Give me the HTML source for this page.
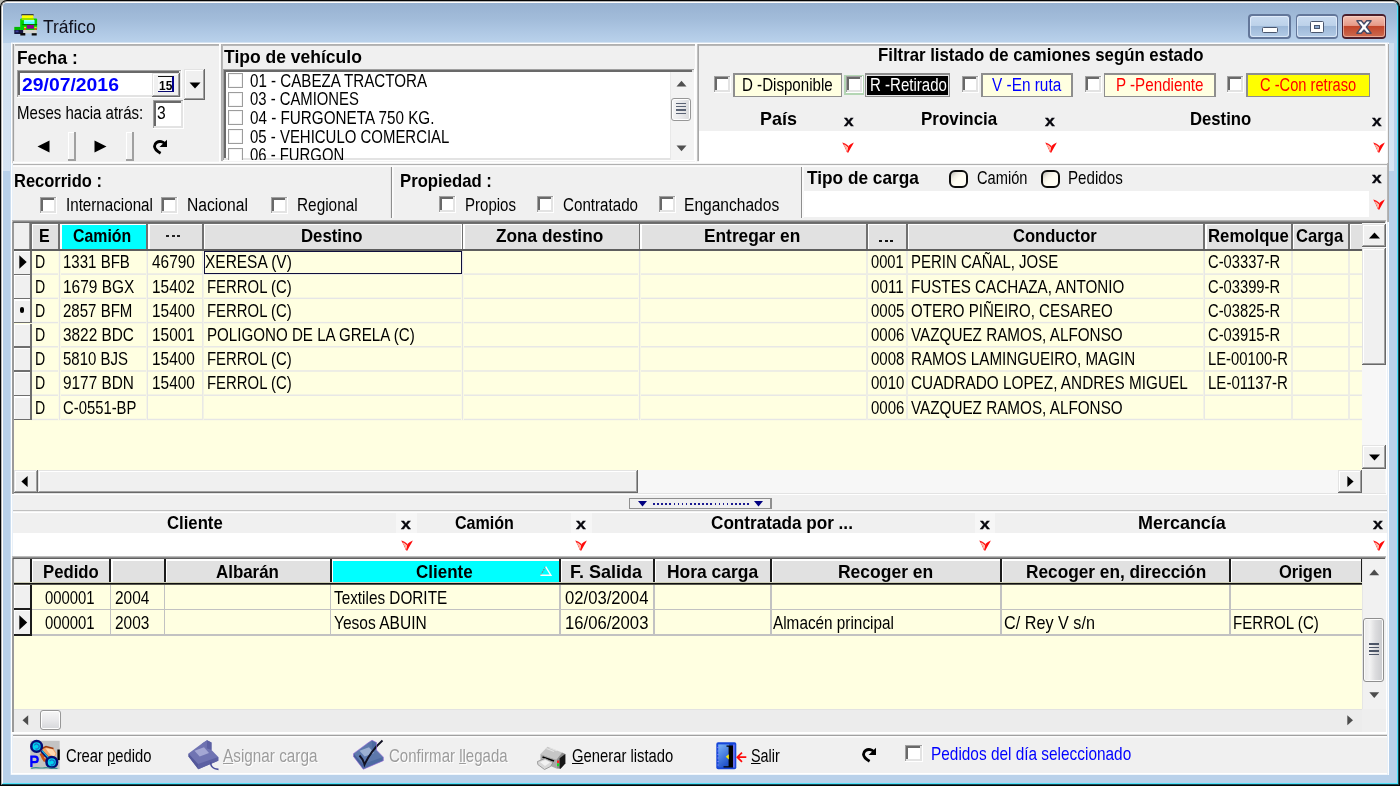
<!DOCTYPE html>
<html><head><meta charset="utf-8"><title>Tráfico</title><style>
html,body{margin:0;padding:0;}
body{width:1400px;height:786px;overflow:hidden;background:#000;position:relative;font-family:"Liberation Sans",sans-serif;}
#w{position:absolute;left:0;top:0;width:1400px;height:786px;overflow:hidden;}
#w div{position:absolute;box-sizing:border-box;}
#w svg{position:absolute;overflow:visible;}
.t{position:absolute;white-space:nowrap;transform-origin:0 0;font-family:"Liberation Sans",sans-serif;}
</style></head>
<body><div id="w">
<div style="left:0px;top:0px;width:1400px;height:786px;background:#b8b8b0;"></div>
<div style="left:0px;top:6px;width:1400px;height:780px;background:#000;"></div>
<div style="left:0px;top:0px;width:1400px;height:786px;background:#050505;border-radius:7px 7px 0 0;"></div>
<div style="left:1px;top:1px;width:1398px;height:784px;border-radius:6px 6px 0 0;border-style:solid;border-width:1px;border-color:#b4b4b4 #164852 #164852 #b4b4b4;"></div>
<div style="left:2px;top:2px;width:1396px;height:782px;border-radius:5px 5px 0 0;border-style:solid;border-width:1px;border-color:#ffffff #4fe3fb #4fe3fb #ffffff;background:#b9d1ea;"></div>
<div style="left:3px;top:3px;width:1394px;height:40px;background:linear-gradient(to bottom,#98b2d1 0,#a2bcda 40%,#b0c9e5 75%,#bad2eb 100%);border-radius:4px 4px 0 0;"></div>
<svg style="left:14px;top:14px" width="24" height="22" viewBox="14 14 24 22">
<rect x="21.4" y="14.1" width="12.2" height="1.6" fill="#2c3038"/>
<rect x="22" y="15.3" width="11.3" height="3.8" fill="#ffff00"/>
<rect x="20.2" y="18.4" width="16.9" height="11.8" rx="1" fill="#00d400"/>
<rect x="21.6" y="18.2" width="12.4" height="2" fill="#9be000"/>
<rect x="23.9" y="20" width="10.7" height="4" fill="#5cffff"/>
<rect x="24.4" y="20.2" width="9.6" height="1.3" fill="#a8ffff"/>
<rect x="22.3" y="24" width="14.8" height="1.2" fill="#007800"/>
<rect x="26.8" y="25" width="7.1" height="3.7" fill="#900090"/>
<rect x="24" y="26.8" width="2.1" height="1.6" fill="#e8e820"/><rect x="24" y="28.2" width="2.1" height="1.8" fill="#f04030"/>
<rect x="34.4" y="26.8" width="2.3" height="1.6" fill="#e8e820"/><rect x="34.4" y="28.2" width="2.3" height="1.8" fill="#f04030"/>
<rect x="14.3" y="26.9" width="6.2" height="3.4" fill="#00b800"/>
<rect x="14.3" y="30" width="9.5" height="4" fill="#14143c"/>
<rect x="15.5" y="30.5" width="3" height="1.8" fill="#3a3c9a"/>
<rect x="23.2" y="30" width="13.5" height="3.3" fill="#d6d6ce"/>
<rect x="20.3" y="33" width="5" height="2.5" fill="#0a0a0a"/>
<rect x="31.7" y="33.2" width="5" height="2.3" fill="#0a0a0a"/>
</svg><span class="t" style="font-size:17.73px;line-height:17.73px;color:#10101c;left:42.9px;top:18.54px;transform:scaleX(0.9850);">Tráfico</span>
<div style="left:1248px;top:14px;width:42.5px;height:24.5px;border-radius:4px;background:#63779a;"></div>
<div style="left:1249.5px;top:15.5px;width:39.5px;height:21.5px;border-radius:3px;background:linear-gradient(to bottom,#c9dbf0 0,#bdd2ea 45%,#9db8d8 50%,#b3cbe6 100%);box-shadow:inset 0 0 0 1px rgba(235,244,255,.7);"></div>
<div style="left:1295.5px;top:14px;width:42.5px;height:24.5px;border-radius:4px;background:#63779a;"></div>
<div style="left:1297px;top:15.5px;width:39.5px;height:21.5px;border-radius:3px;background:linear-gradient(to bottom,#c9dbf0 0,#bdd2ea 45%,#9db8d8 50%,#b3cbe6 100%);box-shadow:inset 0 0 0 1px rgba(235,244,255,.7);"></div>
<div style="left:1341.5px;top:14px;width:44.5px;height:24.5px;border-radius:4px;background:#4b1f2c;"></div>
<div style="left:1343px;top:15.5px;width:41.5px;height:21.5px;border-radius:3px;background:linear-gradient(to bottom,#f3c0b2 0,#e69a88 45%,#c2452a 50%,#cc6a50 100%);box-shadow:inset 0 0 0 1px rgba(255,220,210,.55);"></div>
<div style="left:1262px;top:26.5px;width:15.5px;height:6px;background:#fff;border:1.3px solid #4a566e;border-radius:1.5px;"></div>
<div style="left:1309.5px;top:20.5px;width:14.5px;height:12px;background:#fff;border:1.3px solid #4a566e;border-radius:1.5px;"></div>
<div style="left:1313.5px;top:24.5px;width:6.5px;height:4px;background:#8aa6cc;border:1.2px solid #4a566e;"></div>
<svg style="left:1356px;top:19.5px" width="16" height="14" viewBox="0 0 16 14"><path d="M0.9 0.8h4.4L8 4 10.7 0.8h4.4L10.4 7l4.7 6.2h-4.4L8 10 5.3 13.2H0.9L5.6 7z" fill="#fff" stroke="#454a66" stroke-width="1.4" stroke-linejoin="round"/></svg><div style="left:3px;top:43px;width:7px;height:128px;background:linear-gradient(to bottom,#cfdff0 0,#d6e4f3 100%);"></div>
<div style="left:1389px;top:43px;width:4.5px;height:128px;background:linear-gradient(to bottom,#cfdff0 0,#d8e6f4 100%);"></div>
<div style="left:11px;top:42.6px;width:1378px;height:732.2px;background:#f0f0f0;"></div>
<div style="left:11px;top:42px;width:1378px;height:1px;background:#d5e3f2;"></div>
<div style="left:11px;top:43px;width:1378px;height:1px;background:#ffffff;"></div>
<div style="left:11px;top:44px;width:1378px;height:1px;background:#c7daee;"></div>
<div style="left:10px;top:43px;width:1px;height:732px;background:#ccdef0;"></div>
<div style="left:11px;top:43px;width:1px;height:732px;background:#ffffff;"></div>
<div style="left:12px;top:43px;width:1px;height:732px;background:#e8f0f8;"></div>
<div style="left:11px;top:773px;width:1378px;height:1px;background:#ffffff;"></div>
<div style="left:11px;top:774px;width:1378px;height:1px;background:#f1f6fb;"></div>
<div style="left:1387px;top:43px;width:1px;height:732px;background:#e8f0f8;"></div>
<div style="left:1388px;top:43px;width:1px;height:732px;background:#ffffff;"></div>
<div style="left:1387px;top:44px;width:1px;height:178px;background:#b6b6b6;"></div>
<div style="left:1388px;top:44px;width:1px;height:178px;background:#ababab;"></div>
<div style="left:12.6px;top:44px;width:208px;height:1px;background:#b0b0b0;"></div>
<div style="left:12.6px;top:45px;width:208px;height:1px;background:#b8b8b8;"></div>
<div style="left:12px;top:44.2px;width:1px;height:119px;background:#d0d0d0;"></div>
<div style="left:13px;top:44.2px;width:1px;height:119px;background:#a0a0a0;"></div>
<div style="left:14px;top:44.2px;width:1px;height:119px;background:#e8e8e8;"></div>
<div style="left:12.6px;top:161px;width:208px;height:1px;background:#f3f3f3;"></div>
<div style="left:12.6px;top:162px;width:208px;height:1px;background:#ffffff;"></div>
<div style="left:12.6px;top:163px;width:208px;height:1px;background:#f3f3f3;"></div>
<div style="left:219px;top:44.2px;width:1px;height:119px;background:#fefefe;"></div>
<div style="left:220px;top:44.2px;width:1px;height:119px;background:#f9f9f9;"></div>
<div style="left:221.2px;top:44px;width:475.4px;height:1px;background:#b0b0b0;"></div>
<div style="left:221.2px;top:45px;width:475.4px;height:1px;background:#b8b8b8;"></div>
<div style="left:221px;top:44.2px;width:1px;height:119px;background:#b0b0b0;"></div>
<div style="left:222px;top:44.2px;width:1px;height:119px;background:#b8b8b8;"></div>
<div style="left:221.2px;top:161px;width:475.4px;height:1px;background:#f3f3f3;"></div>
<div style="left:221.2px;top:162px;width:475.4px;height:1px;background:#ffffff;"></div>
<div style="left:221.2px;top:163px;width:475.4px;height:1px;background:#f3f3f3;"></div>
<div style="left:695px;top:44.2px;width:1px;height:119px;background:#fdfdfd;"></div>
<div style="left:696px;top:44.2px;width:1px;height:119px;background:#f9f9f9;"></div>
<div style="left:697.4px;top:44px;width:689.8px;height:1px;background:#b0b0b0;"></div>
<div style="left:697.4px;top:45px;width:689.8px;height:1px;background:#b8b8b8;"></div>
<div style="left:697px;top:44.2px;width:1px;height:119px;background:#c0c0c0;"></div>
<div style="left:698px;top:44.2px;width:1px;height:119px;background:#a8a8a8;"></div>
<div style="left:697.4px;top:161px;width:689.8px;height:1px;background:#f3f3f3;"></div>
<div style="left:697.4px;top:162px;width:689.8px;height:1px;background:#ffffff;"></div>
<div style="left:697.4px;top:163px;width:689.8px;height:1px;background:#f3f3f3;"></div>
<div style="left:1385px;top:44.2px;width:1px;height:119px;background:#f4f4f4;"></div>
<div style="left:1386px;top:44.2px;width:1px;height:119px;background:#ffffff;"></div>
<div style="left:1387px;top:44.2px;width:1px;height:119px;background:#f3f3f3;"></div>
<span class="t" style="font-size:17.88px;line-height:17.88px;color:#000;font-weight:bold;left:17.4px;top:49.62px;transform:scaleX(0.9707);">Fecha :</span>
<div style="left:17px;top:70px;width:164.5px;height:28px;background:#ffffff;"></div>
<div style="left:17px;top:70px;width:163.5px;height:27px;background:#a0a0a0;"></div>
<div style="left:18px;top:71px;width:162.5px;height:26px;background:#e3e3e3;"></div>
<div style="left:18px;top:71px;width:160.5px;height:24px;background:#696969;"></div>
<div style="left:20px;top:73px;width:158.5px;height:22px;background:#fff;"></div>
<span class="t" style="font-size:17.88px;line-height:17.88px;color:#0000ff;font-weight:bold;left:21.7px;top:76.52px;transform:scaleX(1.0840);">29/07/2016</span>
<div style="left:151.5px;top:73px;width:28px;height:24px;background:#696969;"></div>
<div style="left:151.5px;top:73px;width:27px;height:23px;background:#e3e3e3;"></div>
<div style="left:152.5px;top:74px;width:26px;height:22px;background:#a0a0a0;"></div>
<div style="left:152.5px;top:74px;width:25px;height:21px;background:#ffffff;"></div>
<div style="left:153.5px;top:75px;width:24px;height:20px;background:#f0f0f0;"></div>
<div style="left:158px;top:75.6px;width:16px;height:16px;background:#fafafa;border-top:1.5px solid #111;border-bottom:1.6px solid #0a0a70;border-right:2px solid #000090;"></div>
<span class="t" style="font-size:12.06px;line-height:12.06px;color:#000;font-weight:bold;left:158.7px;top:79.64px;transform:scaleX(0.9921);">15</span>
<div style="left:184px;top:69px;width:21px;height:30.5px;background:#696969;"></div>
<div style="left:184px;top:69px;width:20px;height:29.5px;background:#e3e3e3;"></div>
<div style="left:185px;top:70px;width:19px;height:28.5px;background:#a0a0a0;"></div>
<div style="left:185px;top:70px;width:18px;height:27.5px;background:#ffffff;"></div>
<div style="left:186px;top:71px;width:17px;height:26.5px;background:#f0f0f0;"></div>
<svg style="left:188.5px;top:82.4px" width="12" height="7" viewBox="0 0 12 7"><path d="M0.5 0.5h11L6 6.5z" fill="#000"/></svg><span class="t" style="font-size:17.88px;line-height:17.88px;color:#000;left:17.4px;top:105.02px;transform:scaleX(0.8419);">Meses hacia atrás:</span>
<div style="left:152.5px;top:100px;width:31px;height:28.5px;background:#ffffff;"></div>
<div style="left:152.5px;top:100px;width:30px;height:27.5px;background:#a0a0a0;"></div>
<div style="left:153.5px;top:101px;width:29px;height:26.5px;background:#e3e3e3;"></div>
<div style="left:153.5px;top:101px;width:27px;height:24.5px;background:#696969;"></div>
<div style="left:155.5px;top:103px;width:25px;height:22.5px;background:#fff;"></div>
<span class="t" style="font-size:17.88px;line-height:17.88px;color:#000;left:157.4px;top:105.12px;transform:scaleX(0.8755);">3</span>
<svg style="left:36.5px;top:140px" width="13" height="13" viewBox="0 0 13 13"><path d="M12.5 0.5v12L0.5 6.5z" fill="#000"/></svg><svg style="left:94px;top:140px" width="13" height="13" viewBox="0 0 13 13"><path d="M0.5 0.5v12L12.5 6.5z" fill="#000"/></svg><div style="left:67.5px;top:131.5px;width:8px;height:29px;background:#a0a0a0;"></div>
<div style="left:67.5px;top:131.5px;width:6.5px;height:27.5px;background:#ffffff;"></div>
<div style="left:69px;top:133px;width:5px;height:26px;background:#f0f0f0;"></div>
<div style="left:125.5px;top:131.5px;width:8px;height:29px;background:#a0a0a0;"></div>
<div style="left:125.5px;top:131.5px;width:6.5px;height:27.5px;background:#ffffff;"></div>
<div style="left:127px;top:133px;width:5px;height:26px;background:#f0f0f0;"></div>
<svg style="left:152px;top:139px" width="16" height="15.5" viewBox="0 0 16 15.5"><path d="M8.6 14.2C5.2 12.4 2.6 10 2.5 7.3 2.4 3.9 6 1.9 9.3 2.6 10.8 2.9 12 3.7 12.9 4.8" fill="none" stroke="#000" stroke-width="2.9"/><path d="M15 0.7V7.9H7.5z" fill="#000"/></svg><span class="t" style="font-size:17.88px;line-height:17.88px;color:#000;font-weight:bold;left:223.7px;top:48.62px;transform:scaleX(0.9808);">Tipo de vehículo</span>
<div style="left:222.8px;top:69px;width:472px;height:91.5px;background:#ffffff;"></div>
<div style="left:222.8px;top:69px;width:471px;height:90.5px;background:#a0a0a0;"></div>
<div style="left:223.8px;top:70px;width:470px;height:89.5px;background:#e3e3e3;"></div>
<div style="left:223.8px;top:70px;width:468px;height:87.5px;background:#696969;"></div>
<div style="left:225.8px;top:72px;width:466px;height:85.5px;background:#fff;"></div>
<div style="left:225.5px;top:72px;width:444.5px;height:87.5px;overflow:hidden;"><div style="left:2.5px;top:0.9px;width:15px;height:15px;background:#fff;border:1px solid #9c9c9c;box-shadow:inset 0 0 0 1px #f4f4f4;"></div>
<span class="t" style="font-size:17.88px;line-height:17.88px;color:#000;left:24.7px;top:0.62px;transform:scaleX(0.8484);">01 - CABEZA TRACTORA</span>
<div style="left:2.5px;top:19.55px;width:15px;height:15px;background:#fff;border:1px solid #9c9c9c;box-shadow:inset 0 0 0 1px #f4f4f4;"></div>
<span class="t" style="font-size:17.88px;line-height:17.88px;color:#000;left:24.7px;top:19.27px;transform:scaleX(0.8313);">03 - CAMIONES</span>
<div style="left:2.5px;top:38.2px;width:15px;height:15px;background:#fff;border:1px solid #9c9c9c;box-shadow:inset 0 0 0 1px #f4f4f4;"></div>
<span class="t" style="font-size:17.88px;line-height:17.88px;color:#000;left:24.7px;top:37.92px;transform:scaleX(0.8536);">04 - FURGONETA 750 KG.</span>
<div style="left:2.5px;top:56.85px;width:15px;height:15px;background:#fff;border:1px solid #9c9c9c;box-shadow:inset 0 0 0 1px #f4f4f4;"></div>
<span class="t" style="font-size:17.88px;line-height:17.88px;color:#000;left:24.7px;top:56.57px;transform:scaleX(0.8372);">05 - VEHICULO COMERCIAL</span>
<div style="left:2.5px;top:75.5px;width:15px;height:15px;background:#fff;border:1px solid #9c9c9c;box-shadow:inset 0 0 0 1px #f4f4f4;"></div>
<span class="t" style="font-size:17.88px;line-height:17.88px;color:#000;left:24.7px;top:75.22px;transform:scaleX(0.8327);">06 - FURGON</span>
</div>
<div style="left:670px;top:72px;width:23.5px;height:87.5px;background:#f3f3f3;border-left:1px solid #e8e8e8;"></div>
<svg style="left:676px;top:80px" width="11" height="7" viewBox="0 0 11 7"><path d="M0.5 6.5L5.5 0.8 10.5 6.5z" fill="#505050"/></svg><svg style="left:676px;top:144.5px" width="11" height="7" viewBox="0 0 11 7"><path d="M0.5 0.5L5.5 6.2 10.5 0.5z" fill="#505050"/></svg><div style="left:670.5px;top:97.5px;width:20.5px;height:23px;border:1px solid #979797;border-radius:3px;background:linear-gradient(to right,#f5f5f5 0,#e9e9eb 50%,#d9dadc 100%);box-shadow:inset 0 0 0 1px #fff;"></div>
<div style="left:675.5px;top:102.5px;width:10px;height:1.6px;background:#5a6374;"></div>
<div style="left:675.5px;top:105.9px;width:10px;height:1.6px;background:#5a6374;"></div>
<div style="left:675.5px;top:109.3px;width:10px;height:1.6px;background:#5a6374;"></div>
<div style="left:675.5px;top:112.7px;width:10px;height:1.6px;background:#5a6374;"></div>
<span class="t" style="font-size:17.88px;line-height:17.88px;color:#000;font-weight:bold;left:878.2px;top:47.42px;transform:scaleX(0.9394);">Filtrar listado de camiones según estado</span>
<div style="left:714px;top:76px;width:17px;height:17px;background:#ffffff;"></div>
<div style="left:714px;top:76px;width:16px;height:16px;background:#a0a0a0;"></div>
<div style="left:715px;top:77px;width:15px;height:15px;background:#e3e3e3;"></div>
<div style="left:715px;top:77px;width:13px;height:13px;background:#696969;"></div>
<div style="left:717px;top:79px;width:11px;height:11px;background:#fff;"></div>
<div style="left:733px;top:73px;width:109px;height:24px;background:#8e8e8e;"></div>
<div style="left:734.5px;top:74.5px;width:106px;height:21px;background:#ffffe1;"></div>
<span class="t" style="font-size:17.88px;line-height:17.88px;color:#000;left:742.4px;top:77.32px;transform:scaleX(0.8461);">D -Disponible</span>
<div style="left:844px;top:74.5px;width:20px;height:20.5px;background:#b4d6b4;"></div>
<div style="left:845.5px;top:76px;width:17px;height:17px;background:#ffffff;"></div>
<div style="left:845.5px;top:76px;width:16px;height:16px;background:#a0a0a0;"></div>
<div style="left:846.5px;top:77px;width:15px;height:15px;background:#e3e3e3;"></div>
<div style="left:846.5px;top:77px;width:13px;height:13px;background:#696969;"></div>
<div style="left:848.5px;top:79px;width:11px;height:11px;background:#fff;"></div>
<div style="left:864.5px;top:73px;width:85.5px;height:24px;background:#8e8e8e;"></div>
<div style="left:866px;top:74.5px;width:82.5px;height:21px;background:#000;"></div>
<div style="left:866px;top:74.5px;width:82.5px;height:21px;background:#e6e6e6;"></div>
<div style="left:867px;top:75.5px;width:81px;height:19.5px;background:#000;"></div>
<span class="t" style="font-size:17.88px;line-height:17.88px;color:#fff;left:870.4px;top:77.32px;transform:scaleX(0.8422);">R -Retirado</span>
<div style="left:962px;top:76px;width:17px;height:17px;background:#ffffff;"></div>
<div style="left:962px;top:76px;width:16px;height:16px;background:#a0a0a0;"></div>
<div style="left:963px;top:77px;width:15px;height:15px;background:#e3e3e3;"></div>
<div style="left:963px;top:77px;width:13px;height:13px;background:#696969;"></div>
<div style="left:965px;top:79px;width:11px;height:11px;background:#fff;"></div>
<div style="left:981px;top:73px;width:91.5px;height:24px;background:#8e8e8e;"></div>
<div style="left:982.5px;top:74.5px;width:88.5px;height:21px;background:#ffffe1;"></div>
<span class="t" style="font-size:17.88px;line-height:17.88px;color:#0000ff;left:992.4px;top:77.32px;transform:scaleX(0.8606);">V -En ruta</span>
<div style="left:1085px;top:76px;width:17px;height:17px;background:#ffffff;"></div>
<div style="left:1085px;top:76px;width:16px;height:16px;background:#a0a0a0;"></div>
<div style="left:1086px;top:77px;width:15px;height:15px;background:#e3e3e3;"></div>
<div style="left:1086px;top:77px;width:13px;height:13px;background:#696969;"></div>
<div style="left:1088px;top:79px;width:11px;height:11px;background:#fff;"></div>
<div style="left:1103.5px;top:73px;width:112px;height:24px;background:#8e8e8e;"></div>
<div style="left:1105px;top:74.5px;width:109px;height:21px;background:#ffffe1;"></div>
<span class="t" style="font-size:17.88px;line-height:17.88px;color:#ff0000;left:1116.1px;top:77.32px;transform:scaleX(0.8500);">P -Pendiente</span>
<div style="left:1227px;top:76px;width:17px;height:17px;background:#ffffff;"></div>
<div style="left:1227px;top:76px;width:16px;height:16px;background:#a0a0a0;"></div>
<div style="left:1228px;top:77px;width:15px;height:15px;background:#e3e3e3;"></div>
<div style="left:1228px;top:77px;width:13px;height:13px;background:#696969;"></div>
<div style="left:1230px;top:79px;width:11px;height:11px;background:#fff;"></div>
<div style="left:1246px;top:73px;width:124px;height:24px;background:#8e8e8e;"></div>
<div style="left:1247.5px;top:74.5px;width:121px;height:21px;background:#ffff00;"></div>
<span class="t" style="font-size:17.88px;line-height:17.88px;color:#ff0000;left:1260.4px;top:77.32px;transform:scaleX(0.8213);">C -Con retraso</span>
<span class="t" style="font-size:17.88px;line-height:17.88px;color:#000;font-weight:bold;left:760.4px;top:111.32px;transform:scaleX(1.0041);">País</span>
<span class="t" style="font-size:17.88px;line-height:17.88px;color:#000;font-weight:bold;left:921.4px;top:111.32px;transform:scaleX(0.9477);">Provincia</span>
<span class="t" style="font-size:17.88px;line-height:17.88px;color:#000;font-weight:bold;left:1190.4px;top:111.32px;transform:scaleX(0.9344);">Destino</span>
<div style="left:698.5px;top:131px;width:687.5px;height:31.5px;background:#fff;"></div>
<span class="t" style="font-size:14.97px;line-height:14.97px;color:#05050c;font-weight:bold;left:843.5px;top:113.88px;transform:scaleX(1.1527);-webkit-text-stroke:0.35px #05050c;">x</span>
<svg style="left:841.7px;top:142px" width="12" height="11" viewBox="0 0 12 11"><path d="M6.4 3.9C8 2.4 9.8 1.2 11.8 0.4 10.6 3 8.4 6.6 6.2 10.8L5 9.4C5.5 7.6 6 5.8 6.4 3.9z" fill="#ff0a0a"/><path d="M0.2 0.5C2.6 1 4.6 2.2 6.4 3.9L5.9 5.4C4.6 4 3.2 3 1.9 2.4 3.2 4.4 4.2 6.8 5.1 9.4L6.2 10.8C5 10.8 4.4 9.4 4 8 3 5.4 1.8 3 0.2 0.5z" fill="#ff1a1a"/><path d="M1.9 2.4L5.9 5.4 5.1 9.4C4.2 6.8 3.2 4.4 1.9 2.4z" fill="#ffb49c"/></svg><span class="t" style="font-size:14.97px;line-height:14.97px;color:#05050c;font-weight:bold;left:1044.8px;top:113.88px;transform:scaleX(1.1767);-webkit-text-stroke:0.35px #05050c;">x</span>
<svg style="left:1044.8px;top:142px" width="12" height="11" viewBox="0 0 12 11"><path d="M6.4 3.9C8 2.4 9.8 1.2 11.8 0.4 10.6 3 8.4 6.6 6.2 10.8L5 9.4C5.5 7.6 6 5.8 6.4 3.9z" fill="#ff0a0a"/><path d="M0.2 0.5C2.6 1 4.6 2.2 6.4 3.9L5.9 5.4C4.6 4 3.2 3 1.9 2.4 3.2 4.4 4.2 6.8 5.1 9.4L6.2 10.8C5 10.8 4.4 9.4 4 8 3 5.4 1.8 3 0.2 0.5z" fill="#ff1a1a"/><path d="M1.9 2.4L5.9 5.4 5.1 9.4C4.2 6.8 3.2 4.4 1.9 2.4z" fill="#ffb49c"/></svg><span class="t" style="font-size:14.97px;line-height:14.97px;color:#05050c;font-weight:bold;left:1371.5px;top:113.88px;transform:scaleX(1.1527);-webkit-text-stroke:0.35px #05050c;">x</span>
<svg style="left:1372.5px;top:142px" width="12" height="11" viewBox="0 0 12 11"><path d="M6.4 3.9C8 2.4 9.8 1.2 11.8 0.4 10.6 3 8.4 6.6 6.2 10.8L5 9.4C5.5 7.6 6 5.8 6.4 3.9z" fill="#ff0a0a"/><path d="M0.2 0.5C2.6 1 4.6 2.2 6.4 3.9L5.9 5.4C4.6 4 3.2 3 1.9 2.4 3.2 4.4 4.2 6.8 5.1 9.4L6.2 10.8C5 10.8 4.4 9.4 4 8 3 5.4 1.8 3 0.2 0.5z" fill="#ff1a1a"/><path d="M1.9 2.4L5.9 5.4 5.1 9.4C4.2 6.8 3.2 4.4 1.9 2.4z" fill="#ffb49c"/></svg><div style="left:12.6px;top:164px;width:1374.7px;height:1px;background:#b0b0b0;"></div>
<div style="left:12.6px;top:165px;width:1374.7px;height:1px;background:#c0c0c0;"></div>
<div style="left:12.6px;top:165px;width:1374.7px;height:1px;background:#f6f6f6;"></div>
<div style="left:12.6px;top:166px;width:1374.7px;height:1px;background:#fcfcfc;"></div>
<div style="left:390px;top:167px;width:1px;height:51px;background:#e6e6e6;"></div>
<div style="left:391px;top:167px;width:1px;height:51px;background:#8e8e8e;"></div>
<div style="left:392px;top:167px;width:1px;height:51px;background:#dcdcdc;"></div>
<div style="left:392px;top:167px;width:1px;height:51px;background:#fcfcfc;"></div>
<div style="left:393px;top:167px;width:1px;height:51px;background:#f8f8f8;"></div>
<div style="left:801px;top:167px;width:1px;height:51px;background:#8e8e8e;"></div>
<div style="left:802px;top:167px;width:1px;height:51px;background:#d3d3d3;"></div>
<div style="left:802px;top:167px;width:1px;height:51px;background:#fbfbfb;"></div>
<div style="left:803px;top:167px;width:1px;height:51px;background:#f9f9f9;"></div>
<span class="t" style="font-size:17.88px;line-height:17.88px;color:#000;font-weight:bold;left:13.7px;top:173.32px;transform:scaleX(0.9227);">Recorrido :</span>
<div style="left:40px;top:196.5px;width:17px;height:17px;background:#ffffff;"></div>
<div style="left:40px;top:196.5px;width:16px;height:16px;background:#a0a0a0;"></div>
<div style="left:41px;top:197.5px;width:15px;height:15px;background:#e3e3e3;"></div>
<div style="left:41px;top:197.5px;width:13px;height:13px;background:#696969;"></div>
<div style="left:43px;top:199.5px;width:11px;height:11px;background:#fff;"></div>
<span class="t" style="font-size:17.88px;line-height:17.88px;color:#000;left:65.7px;top:197.32px;transform:scaleX(0.8497);">Internacional</span>
<div style="left:161px;top:196.5px;width:17px;height:17px;background:#ffffff;"></div>
<div style="left:161px;top:196.5px;width:16px;height:16px;background:#a0a0a0;"></div>
<div style="left:162px;top:197.5px;width:15px;height:15px;background:#e3e3e3;"></div>
<div style="left:162px;top:197.5px;width:13px;height:13px;background:#696969;"></div>
<div style="left:164px;top:199.5px;width:11px;height:11px;background:#fff;"></div>
<span class="t" style="font-size:17.88px;line-height:17.88px;color:#000;left:186.7px;top:197.32px;transform:scaleX(0.8763);">Nacional</span>
<div style="left:271px;top:196.5px;width:17px;height:17px;background:#ffffff;"></div>
<div style="left:271px;top:196.5px;width:16px;height:16px;background:#a0a0a0;"></div>
<div style="left:272px;top:197.5px;width:15px;height:15px;background:#e3e3e3;"></div>
<div style="left:272px;top:197.5px;width:13px;height:13px;background:#696969;"></div>
<div style="left:274px;top:199.5px;width:11px;height:11px;background:#fff;"></div>
<span class="t" style="font-size:17.88px;line-height:17.88px;color:#000;left:296.9px;top:197.32px;transform:scaleX(0.8610);">Regional</span>
<span class="t" style="font-size:17.88px;line-height:17.88px;color:#000;font-weight:bold;left:399.7px;top:173.32px;transform:scaleX(0.9354);">Propiedad :</span>
<div style="left:439.2px;top:196px;width:17px;height:17px;background:#ffffff;"></div>
<div style="left:439.2px;top:196px;width:16px;height:16px;background:#a0a0a0;"></div>
<div style="left:440.2px;top:197px;width:15px;height:15px;background:#e3e3e3;"></div>
<div style="left:440.2px;top:197px;width:13px;height:13px;background:#696969;"></div>
<div style="left:442.2px;top:199px;width:11px;height:11px;background:#fff;"></div>
<span class="t" style="font-size:17.88px;line-height:17.88px;color:#000;left:464.9px;top:197.32px;transform:scaleX(0.8421);">Propios</span>
<div style="left:537.3px;top:196px;width:17px;height:17px;background:#ffffff;"></div>
<div style="left:537.3px;top:196px;width:16px;height:16px;background:#a0a0a0;"></div>
<div style="left:538.3px;top:197px;width:15px;height:15px;background:#e3e3e3;"></div>
<div style="left:538.3px;top:197px;width:13px;height:13px;background:#696969;"></div>
<div style="left:540.3px;top:199px;width:11px;height:11px;background:#fff;"></div>
<span class="t" style="font-size:17.88px;line-height:17.88px;color:#000;left:563px;top:197.32px;transform:scaleX(0.8487);">Contratado</span>
<div style="left:658.8px;top:196px;width:17px;height:17px;background:#ffffff;"></div>
<div style="left:658.8px;top:196px;width:16px;height:16px;background:#a0a0a0;"></div>
<div style="left:659.8px;top:197px;width:15px;height:15px;background:#e3e3e3;"></div>
<div style="left:659.8px;top:197px;width:13px;height:13px;background:#696969;"></div>
<div style="left:661.8px;top:199px;width:11px;height:11px;background:#fff;"></div>
<span class="t" style="font-size:17.88px;line-height:17.88px;color:#000;left:684.4px;top:197.32px;transform:scaleX(0.8715);">Enganchados</span>
<span class="t" style="font-size:17.88px;line-height:17.88px;color:#000;font-weight:bold;left:806.7px;top:169.62px;transform:scaleX(0.9663);">Tipo de carga</span>
<div style="left:804px;top:191px;width:564.6px;height:26px;background:#fff;"></div>
<div style="left:949px;top:169.6px;width:19px;height:18.8px;border:2px solid #0c0c0c;border-radius:6px;background:linear-gradient(135deg,#b9b9b4 0,#efece2 28%,#fffdf2 50%,#fffef6 100%);"></div>
<span class="t" style="font-size:17.88px;line-height:17.88px;color:#000;left:977px;top:170.12px;transform:scaleX(0.8189);">Camión</span>
<div style="left:1040.6px;top:169.6px;width:19px;height:18.8px;border:2px solid #0c0c0c;border-radius:6px;background:linear-gradient(135deg,#b9b9b4 0,#efece2 28%,#fffdf2 50%,#fffef6 100%);"></div>
<span class="t" style="font-size:17.88px;line-height:17.88px;color:#000;left:1067.8px;top:170.12px;transform:scaleX(0.8490);">Pedidos</span>
<span class="t" style="font-size:14.97px;line-height:14.97px;color:#05050c;font-weight:bold;left:1372px;top:171.38px;transform:scaleX(1.1527);-webkit-text-stroke:0.35px #05050c;">x</span>
<svg style="left:1372.5px;top:198.5px" width="12" height="11" viewBox="0 0 12 11"><path d="M6.4 3.9C8 2.4 9.8 1.2 11.8 0.4 10.6 3 8.4 6.6 6.2 10.8L5 9.4C5.5 7.6 6 5.8 6.4 3.9z" fill="#ff0a0a"/><path d="M0.2 0.5C2.6 1 4.6 2.2 6.4 3.9L5.9 5.4C4.6 4 3.2 3 1.9 2.4 3.2 4.4 4.2 6.8 5.1 9.4L6.2 10.8C5 10.8 4.4 9.4 4 8 3 5.4 1.8 3 0.2 0.5z" fill="#ff1a1a"/><path d="M1.9 2.4L5.9 5.4 5.1 9.4C4.2 6.8 3.2 4.4 1.9 2.4z" fill="#ffb49c"/></svg><div style="left:12.3px;top:221px;width:1375.2px;height:274px;background:#fff;"></div>
<div style="left:12.3px;top:221px;width:1373.9px;height:272.7px;background:#9a9a9a;"></div>
<div style="left:13.5px;top:222px;width:1372.8px;height:271.5px;background:#e3e3e3;"></div>
<div style="left:13.5px;top:222px;width:1371.5px;height:270.2px;background:#6a6a6a;"></div>
<div style="left:12.3px;top:220px;width:1374.2px;height:1px;background:#b0b0b0;"></div>
<div style="left:12.3px;top:221px;width:1374.2px;height:1px;background:#c0c0c0;"></div>
<div style="left:13.3px;top:221px;width:1372.2px;height:1px;background:#8a8a8a;"></div>
<div style="left:13.3px;top:222px;width:1372.2px;height:1px;background:#6a6a6a;"></div>
<div style="left:13.3px;top:223px;width:1372.2px;height:1px;background:#959595;"></div>
<div style="left:14px;top:223px;width:1371px;height:246.5px;background:#ffffe1;"></div>
<div style="left:31px;top:273px;width:1331px;height:1px;background:#f0f0e4;"></div>
<div style="left:31px;top:274px;width:1331px;height:1px;background:#ebebe5;"></div>
<div style="left:31px;top:297px;width:1331px;height:1px;background:#f6f6e3;"></div>
<div style="left:31px;top:298px;width:1331px;height:1px;background:#e6e6e6;"></div>
<div style="left:31px;top:299px;width:1331px;height:1px;background:#fefee1;"></div>
<div style="left:31px;top:321px;width:1331px;height:1px;background:#fcfce2;"></div>
<div style="left:31px;top:322px;width:1331px;height:1px;background:#e6e6e6;"></div>
<div style="left:31px;top:323px;width:1331px;height:1px;background:#f8f8e2;"></div>
<div style="left:31px;top:346px;width:1331px;height:1px;background:#e8e8e6;"></div>
<div style="left:31px;top:347px;width:1331px;height:1px;background:#f3f3e3;"></div>
<div style="left:31px;top:370px;width:1331px;height:1px;background:#edede5;"></div>
<div style="left:31px;top:371px;width:1331px;height:1px;background:#eeeee4;"></div>
<div style="left:31px;top:394px;width:1331px;height:1px;background:#f3f3e3;"></div>
<div style="left:31px;top:395px;width:1331px;height:1px;background:#e8e8e6;"></div>
<div style="left:31px;top:418px;width:1331px;height:1px;background:#f9f9e2;"></div>
<div style="left:31px;top:419px;width:1331px;height:1px;background:#e6e6e6;"></div>
<div style="left:31px;top:420px;width:1331px;height:1px;background:#fbfbe2;"></div>
<div style="left:58px;top:250.3px;width:1px;height:169.54px;background:#fafae2;"></div>
<div style="left:59px;top:250.3px;width:1px;height:169.54px;background:#e6e6e6;"></div>
<div style="left:60px;top:250.3px;width:1px;height:169.54px;background:#fafae2;"></div>
<div style="left:146px;top:250.3px;width:1px;height:169.54px;background:#f5f5e3;"></div>
<div style="left:147px;top:250.3px;width:1px;height:169.54px;background:#e6e6e6;"></div>
<div style="left:202px;top:250.3px;width:1px;height:169.54px;background:#e9e9e5;"></div>
<div style="left:203px;top:250.3px;width:1px;height:169.54px;background:#f2f2e4;"></div>
<div style="left:461px;top:250.3px;width:1px;height:169.54px;background:#fafae2;"></div>
<div style="left:462px;top:250.3px;width:1px;height:169.54px;background:#e6e6e6;"></div>
<div style="left:463px;top:250.3px;width:1px;height:169.54px;background:#fafae2;"></div>
<div style="left:638px;top:250.3px;width:1px;height:169.54px;background:#fcfce2;"></div>
<div style="left:639px;top:250.3px;width:1px;height:169.54px;background:#e6e6e6;"></div>
<div style="left:640px;top:250.3px;width:1px;height:169.54px;background:#f7f7e3;"></div>
<div style="left:866px;top:250.3px;width:1px;height:169.54px;background:#edede5;"></div>
<div style="left:867px;top:250.3px;width:1px;height:169.54px;background:#edede5;"></div>
<div style="left:906px;top:250.3px;width:1px;height:169.54px;background:#edede5;"></div>
<div style="left:907px;top:250.3px;width:1px;height:169.54px;background:#edede5;"></div>
<div style="left:1203px;top:250.3px;width:1px;height:169.54px;background:#f2f2e4;"></div>
<div style="left:1204px;top:250.3px;width:1px;height:169.54px;background:#e8e8e6;"></div>
<div style="left:1291px;top:250.3px;width:1px;height:169.54px;background:#edede5;"></div>
<div style="left:1292px;top:250.3px;width:1px;height:169.54px;background:#edede5;"></div>
<div style="left:1348px;top:250.3px;width:1px;height:169.54px;background:#edede5;"></div>
<div style="left:1349px;top:250.3px;width:1px;height:169.54px;background:#edede5;"></div>
<div style="left:14px;top:223px;width:1348px;height:27.5px;background:#707070;"></div>
<div style="left:14px;top:223.2px;width:15.4px;height:27.3px;background:#f0f0f0;"></div>
<div style="left:29px;top:223.2px;width:1px;height:27.3px;background:#959595;"></div>
<div style="left:30px;top:223.2px;width:1px;height:27.3px;background:#6e6e6e;"></div>
<div style="left:31.7px;top:223.5px;width:26.6px;height:25.2px;background:#fff;"></div>
<div style="left:33px;top:224.8px;width:25.3px;height:23.9px;background:#e1e1e1;"></div>
<span class="t" style="font-size:17.88px;line-height:17.88px;color:#000;font-weight:bold;left:38.9px;top:228.42px;transform:scaleX(0.8975);">E</span>
<div style="left:60.3px;top:223.5px;width:86px;height:25.2px;background:#fff;"></div>
<div style="left:61.6px;top:224.8px;width:84.7px;height:23.9px;background:#00ffff;"></div>
<span class="t" style="font-size:17.88px;line-height:17.88px;color:#000;font-weight:bold;left:73.4px;top:228.42px;transform:scaleX(0.8885);">Camión</span>
<div style="left:148.2px;top:223.5px;width:53.6px;height:25.2px;background:#fff;"></div>
<div style="left:149.5px;top:224.8px;width:52.3px;height:23.9px;background:#e1e1e1;"></div>
<div style="left:204px;top:223.5px;width:257.5px;height:25.2px;background:#fff;"></div>
<div style="left:205.3px;top:224.8px;width:256.2px;height:23.9px;background:#e1e1e1;"></div>
<span class="t" style="font-size:17.88px;line-height:17.88px;color:#000;font-weight:bold;left:301.1px;top:228.42px;transform:scaleX(0.9389);">Destino</span>
<div style="left:463.3px;top:223.5px;width:175.3px;height:25.2px;background:#fff;"></div>
<div style="left:464.6px;top:224.8px;width:174px;height:23.9px;background:#e1e1e1;"></div>
<span class="t" style="font-size:17.88px;line-height:17.88px;color:#000;font-weight:bold;left:496.4px;top:228.42px;transform:scaleX(0.9647);">Zona destino</span>
<div style="left:640.4px;top:223.5px;width:225.6px;height:25.2px;background:#fff;"></div>
<div style="left:641.7px;top:224.8px;width:224.3px;height:23.9px;background:#e1e1e1;"></div>
<span class="t" style="font-size:17.88px;line-height:17.88px;color:#000;font-weight:bold;left:704.4px;top:228.42px;transform:scaleX(0.9693);">Entregar en</span>
<div style="left:868px;top:223.5px;width:38px;height:25.2px;background:#fff;"></div>
<div style="left:869.3px;top:224.8px;width:36.7px;height:23.9px;background:#e1e1e1;"></div>
<div style="left:908px;top:223.5px;width:295.2px;height:25.2px;background:#fff;"></div>
<div style="left:909.3px;top:224.8px;width:293.9px;height:23.9px;background:#e1e1e1;"></div>
<span class="t" style="font-size:17.88px;line-height:17.88px;color:#000;font-weight:bold;left:1013.4px;top:228.42px;transform:scaleX(0.9271);">Conductor</span>
<div style="left:1205.2px;top:223.5px;width:85.8px;height:25.2px;background:#fff;"></div>
<div style="left:1206.5px;top:224.8px;width:84.5px;height:23.9px;background:#e1e1e1;"></div>
<span class="t" style="font-size:17.88px;line-height:17.88px;color:#000;font-weight:bold;left:1208px;top:228.42px;transform:scaleX(0.9370);">Remolque</span>
<div style="left:1293px;top:223.5px;width:55px;height:25.2px;background:#fff;"></div>
<div style="left:1294.3px;top:224.8px;width:53.7px;height:23.9px;background:#e1e1e1;"></div>
<span class="t" style="font-size:17.88px;line-height:17.88px;color:#000;font-weight:bold;left:1296.4px;top:228.42px;transform:scaleX(0.9323);">Carga</span>
<div style="left:1350px;top:223.5px;width:12px;height:25.2px;background:#fff;"></div>
<div style="left:1351.3px;top:224.8px;width:10.7px;height:23.9px;background:#e1e1e1;"></div>
<div style="left:166.3px;top:235.3px;width:3.2px;height:1.8px;background:#222;"></div>
<div style="left:171.5px;top:235.3px;width:3.2px;height:1.8px;background:#222;"></div>
<div style="left:176.7px;top:235.3px;width:3.2px;height:1.8px;background:#222;"></div>
<div style="left:879.3px;top:239.8px;width:3.2px;height:2px;background:#111;"></div>
<div style="left:884.7px;top:239.8px;width:3.2px;height:2px;background:#111;"></div>
<div style="left:890.1px;top:239.8px;width:3.2px;height:2px;background:#111;"></div>
<div style="left:14px;top:248.7px;width:1348px;height:2px;background:#5e5e5e;"></div>
<div style="left:14px;top:250.9px;width:17.5px;height:24.02px;background:#6e6e6e;"></div>
<div style="left:14px;top:250.9px;width:16px;height:22.62px;background:#fff;"></div>
<div style="left:15.3px;top:252.2px;width:14.7px;height:21.32px;background:#f0f0f0;"></div>
<div style="left:14px;top:275.12px;width:17.5px;height:24.02px;background:#6e6e6e;"></div>
<div style="left:14px;top:275.12px;width:16px;height:22.62px;background:#fff;"></div>
<div style="left:15.3px;top:276.42px;width:14.7px;height:21.32px;background:#f0f0f0;"></div>
<div style="left:14px;top:299.34px;width:17.5px;height:24.02px;background:#6e6e6e;"></div>
<div style="left:14px;top:299.34px;width:16px;height:22.62px;background:#fff;"></div>
<div style="left:15.3px;top:300.64px;width:14.7px;height:21.32px;background:#f0f0f0;"></div>
<div style="left:14px;top:323.56px;width:17.5px;height:24.02px;background:#6e6e6e;"></div>
<div style="left:14px;top:323.56px;width:16px;height:22.62px;background:#fff;"></div>
<div style="left:15.3px;top:324.86px;width:14.7px;height:21.32px;background:#f0f0f0;"></div>
<div style="left:14px;top:347.78px;width:17.5px;height:24.02px;background:#6e6e6e;"></div>
<div style="left:14px;top:347.78px;width:16px;height:22.62px;background:#fff;"></div>
<div style="left:15.3px;top:349.08px;width:14.7px;height:21.32px;background:#f0f0f0;"></div>
<div style="left:14px;top:372px;width:17.5px;height:24.02px;background:#6e6e6e;"></div>
<div style="left:14px;top:372px;width:16px;height:22.62px;background:#fff;"></div>
<div style="left:15.3px;top:373.3px;width:14.7px;height:21.32px;background:#f0f0f0;"></div>
<div style="left:14px;top:396.22px;width:17.5px;height:24.02px;background:#6e6e6e;"></div>
<div style="left:14px;top:396.22px;width:16px;height:22.62px;background:#fff;"></div>
<div style="left:15.3px;top:397.52px;width:14.7px;height:21.32px;background:#f0f0f0;"></div>
<svg style="left:18.5px;top:255px" width="8" height="14" viewBox="0 0 8 14"><path d="M0.3 0.3v13.4L7.7 7z" fill="#000"/></svg><div style="left:20px;top:307px;width:4.2px;height:6px;background:#000;border-radius:2px;"></div>
<span class="t" style="font-size:17.88px;line-height:17.88px;color:#000;left:34.7px;top:254.32px;transform:scaleX(0.7903);">D</span>
<span class="t" style="font-size:17.88px;line-height:17.88px;color:#000;left:62.7px;top:254.32px;transform:scaleX(0.8422);">1331 BFB</span>
<span class="t" style="font-size:17.88px;line-height:17.88px;color:#000;left:151.7px;top:254.32px;transform:scaleX(0.8637);">46790</span>
<span class="t" style="font-size:17.88px;line-height:17.88px;color:#000;left:205.4px;top:254.32px;transform:scaleX(0.8658);">XERESA (V)</span>
<span class="t" style="font-size:17.88px;line-height:17.88px;color:#000;left:871.2px;top:254.32px;transform:scaleX(0.8230);">0001</span>
<span class="t" style="font-size:17.88px;line-height:17.88px;color:#000;left:911.4px;top:254.32px;transform:scaleX(0.8379);">PERIN CAÑAL, JOSE</span>
<span class="t" style="font-size:17.88px;line-height:17.88px;color:#000;left:1208.2px;top:254.32px;transform:scaleX(0.8253);">C-03337-R</span>
<span class="t" style="font-size:17.88px;line-height:17.88px;color:#000;left:34.7px;top:278.54px;transform:scaleX(0.7903);">D</span>
<span class="t" style="font-size:17.88px;line-height:17.88px;color:#000;left:62.7px;top:278.54px;transform:scaleX(0.8663);">1679 BGX</span>
<span class="t" style="font-size:17.88px;line-height:17.88px;color:#000;left:151.7px;top:278.54px;transform:scaleX(0.8637);">15402</span>
<span class="t" style="font-size:17.88px;line-height:17.88px;color:#000;left:206.9px;top:278.54px;transform:scaleX(0.8342);">FERROL (C)</span>
<span class="t" style="font-size:17.88px;line-height:17.88px;color:#000;left:871.2px;top:278.54px;transform:scaleX(0.8514);">0011</span>
<span class="t" style="font-size:17.88px;line-height:17.88px;color:#000;left:911.4px;top:278.54px;transform:scaleX(0.8503);">FUSTES CACHAZA, ANTONIO</span>
<span class="t" style="font-size:17.88px;line-height:17.88px;color:#000;left:1208.2px;top:278.54px;transform:scaleX(0.8253);">C-03399-R</span>
<span class="t" style="font-size:17.88px;line-height:17.88px;color:#000;left:34.7px;top:302.76px;transform:scaleX(0.7903);">D</span>
<span class="t" style="font-size:17.88px;line-height:17.88px;color:#000;left:62.7px;top:302.76px;transform:scaleX(0.8423);">2857 BFM</span>
<span class="t" style="font-size:17.88px;line-height:17.88px;color:#000;left:151.7px;top:302.76px;transform:scaleX(0.8637);">15400</span>
<span class="t" style="font-size:17.88px;line-height:17.88px;color:#000;left:206.9px;top:302.76px;transform:scaleX(0.8342);">FERROL (C)</span>
<span class="t" style="font-size:17.88px;line-height:17.88px;color:#000;left:871.2px;top:302.76px;transform:scaleX(0.8406);">0005</span>
<span class="t" style="font-size:17.88px;line-height:17.88px;color:#000;left:911.4px;top:302.76px;transform:scaleX(0.8433);">OTERO PIÑEIRO, CESAREO</span>
<span class="t" style="font-size:17.88px;line-height:17.88px;color:#000;left:1208.2px;top:302.76px;transform:scaleX(0.8253);">C-03825-R</span>
<span class="t" style="font-size:17.88px;line-height:17.88px;color:#000;left:34.7px;top:326.98px;transform:scaleX(0.7903);">D</span>
<span class="t" style="font-size:17.88px;line-height:17.88px;color:#000;left:62.7px;top:326.98px;transform:scaleX(0.8604);">3822 BDC</span>
<span class="t" style="font-size:17.88px;line-height:17.88px;color:#000;left:151.7px;top:326.98px;transform:scaleX(0.8637);">15001</span>
<span class="t" style="font-size:17.88px;line-height:17.88px;color:#000;left:206.9px;top:326.98px;transform:scaleX(0.8473);">POLIGONO DE LA GRELA (C)</span>
<span class="t" style="font-size:17.88px;line-height:17.88px;color:#000;left:871.2px;top:326.98px;transform:scaleX(0.8406);">0006</span>
<span class="t" style="font-size:17.88px;line-height:17.88px;color:#000;left:911.4px;top:326.98px;transform:scaleX(0.8544);">VAZQUEZ RAMOS, ALFONSO</span>
<span class="t" style="font-size:17.88px;line-height:17.88px;color:#000;left:1208.2px;top:326.98px;transform:scaleX(0.8253);">C-03915-R</span>
<span class="t" style="font-size:17.88px;line-height:17.88px;color:#000;left:34.7px;top:351.2px;transform:scaleX(0.7903);">D</span>
<span class="t" style="font-size:17.88px;line-height:17.88px;color:#000;left:62.7px;top:351.2px;transform:scaleX(0.8379);">5810 BJS</span>
<span class="t" style="font-size:17.88px;line-height:17.88px;color:#000;left:151.7px;top:351.2px;transform:scaleX(0.8637);">15400</span>
<span class="t" style="font-size:17.88px;line-height:17.88px;color:#000;left:206.9px;top:351.2px;transform:scaleX(0.8342);">FERROL (C)</span>
<span class="t" style="font-size:17.88px;line-height:17.88px;color:#000;left:871.2px;top:351.2px;transform:scaleX(0.8406);">0008</span>
<span class="t" style="font-size:17.88px;line-height:17.88px;color:#000;left:911.4px;top:351.2px;transform:scaleX(0.8494);">RAMOS LAMINGUEIRO, MAGIN</span>
<span class="t" style="font-size:17.88px;line-height:17.88px;color:#000;left:1208.2px;top:351.2px;transform:scaleX(0.8296);">LE-00100-R</span>
<span class="t" style="font-size:17.88px;line-height:17.88px;color:#000;left:34.7px;top:375.42px;transform:scaleX(0.7903);">D</span>
<span class="t" style="font-size:17.88px;line-height:17.88px;color:#000;left:62.7px;top:375.42px;transform:scaleX(0.8604);">9177 BDN</span>
<span class="t" style="font-size:17.88px;line-height:17.88px;color:#000;left:151.7px;top:375.42px;transform:scaleX(0.8637);">15400</span>
<span class="t" style="font-size:17.88px;line-height:17.88px;color:#000;left:206.9px;top:375.42px;transform:scaleX(0.8342);">FERROL (C)</span>
<span class="t" style="font-size:17.88px;line-height:17.88px;color:#000;left:871.2px;top:375.42px;transform:scaleX(0.8406);">0010</span>
<span class="t" style="font-size:17.88px;line-height:17.88px;color:#000;left:911.4px;top:375.42px;transform:scaleX(0.8579);">CUADRADO LOPEZ, ANDRES MIGUEL</span>
<span class="t" style="font-size:17.88px;line-height:17.88px;color:#000;left:1208.2px;top:375.42px;transform:scaleX(0.8412);">LE-01137-R</span>
<span class="t" style="font-size:17.88px;line-height:17.88px;color:#000;left:34.7px;top:399.64px;transform:scaleX(0.7903);">D</span>
<span class="t" style="font-size:17.88px;line-height:17.88px;color:#000;left:62.7px;top:399.64px;transform:scaleX(0.8307);">C-0551-BP</span>
<span class="t" style="font-size:17.88px;line-height:17.88px;color:#000;left:871.2px;top:399.64px;transform:scaleX(0.8406);">0006</span>
<span class="t" style="font-size:17.88px;line-height:17.88px;color:#000;left:911.4px;top:399.64px;transform:scaleX(0.8544);">VAZQUEZ RAMOS, ALFONSO</span>
<div style="left:204px;top:250.6px;width:258px;height:23.3px;border:1.8px solid #10103c;"></div>
<div style="left:1362px;top:223px;width:23.5px;height:246.5px;background:#f7f7f7;"></div>
<div style="left:1362px;top:223.5px;width:23.5px;height:23.5px;background:#696969;"></div>
<div style="left:1362px;top:223.5px;width:22.5px;height:22.5px;background:#e3e3e3;"></div>
<div style="left:1363px;top:224.5px;width:21.5px;height:21.5px;background:#a0a0a0;"></div>
<div style="left:1363px;top:224.5px;width:20.5px;height:20.5px;background:#ffffff;"></div>
<div style="left:1364px;top:225.5px;width:19.5px;height:19.5px;background:#f0f0f0;"></div>
<svg style="left:1368.5px;top:231.5px" width="11" height="7" viewBox="0 0 11 7"><path d="M0 6.6L5.5 0.4 11 6.6z" fill="#000"/></svg><div style="left:1362px;top:247.5px;width:23.5px;height:117.5px;background:#696969;"></div>
<div style="left:1362px;top:247.5px;width:22.5px;height:116.5px;background:#e3e3e3;"></div>
<div style="left:1363px;top:248.5px;width:21.5px;height:115.5px;background:#a0a0a0;"></div>
<div style="left:1363px;top:248.5px;width:20.5px;height:114.5px;background:#ffffff;"></div>
<div style="left:1364px;top:249.5px;width:19.5px;height:113.5px;background:#f0f0f0;"></div>
<div style="left:1362px;top:445px;width:23.5px;height:23.5px;background:#696969;"></div>
<div style="left:1362px;top:445px;width:22.5px;height:22.5px;background:#e3e3e3;"></div>
<div style="left:1363px;top:446px;width:21.5px;height:21.5px;background:#a0a0a0;"></div>
<div style="left:1363px;top:446px;width:20.5px;height:20.5px;background:#ffffff;"></div>
<div style="left:1364px;top:447px;width:19.5px;height:19.5px;background:#f0f0f0;"></div>
<svg style="left:1368.5px;top:453.5px" width="11" height="7" viewBox="0 0 11 7"><path d="M0 0.4L5.5 6.6 11 0.4z" fill="#000"/></svg><div style="left:14px;top:469.5px;width:1371.5px;height:23.5px;background:#f7f7f7;"></div>
<div style="left:14px;top:469.5px;width:23.5px;height:23.5px;background:#696969;"></div>
<div style="left:14px;top:469.5px;width:22.5px;height:22.5px;background:#e3e3e3;"></div>
<div style="left:15px;top:470.5px;width:21.5px;height:21.5px;background:#a0a0a0;"></div>
<div style="left:15px;top:470.5px;width:20.5px;height:20.5px;background:#ffffff;"></div>
<div style="left:16px;top:471.5px;width:19.5px;height:19.5px;background:#f0f0f0;"></div>
<svg style="left:21px;top:475.5px" width="7" height="11" viewBox="0 0 7 11"><path d="M6.6 0L0.4 5.5 6.6 11z" fill="#000"/></svg><div style="left:37.8px;top:469.5px;width:600.5px;height:23.5px;background:#696969;"></div>
<div style="left:37.8px;top:469.5px;width:599.5px;height:22.5px;background:#e3e3e3;"></div>
<div style="left:38.8px;top:470.5px;width:598.5px;height:21.5px;background:#a0a0a0;"></div>
<div style="left:38.8px;top:470.5px;width:597.5px;height:20.5px;background:#ffffff;"></div>
<div style="left:39.8px;top:471.5px;width:596.5px;height:19.5px;background:#f0f0f0;"></div>
<div style="left:1337.5px;top:469.5px;width:24px;height:23.5px;background:#696969;"></div>
<div style="left:1337.5px;top:469.5px;width:23px;height:22.5px;background:#e3e3e3;"></div>
<div style="left:1338.5px;top:470.5px;width:22px;height:21.5px;background:#a0a0a0;"></div>
<div style="left:1338.5px;top:470.5px;width:21px;height:20.5px;background:#ffffff;"></div>
<div style="left:1339.5px;top:471.5px;width:20px;height:19.5px;background:#f0f0f0;"></div>
<svg style="left:1347px;top:475.5px" width="7" height="11" viewBox="0 0 7 11"><path d="M0.4 0L6.6 5.5 0.4 11z" fill="#000"/></svg><div style="left:1361.8px;top:469.5px;width:23.7px;height:23.5px;background:#f0f0f0;"></div>
<div style="left:629px;top:498px;width:142.5px;height:11px;background:#8f8f8f;"></div>
<div style="left:630.3px;top:499.3px;width:140px;height:8.5px;background:#f0f0f0;"></div>
<svg style="left:638px;top:501.3px" width="9" height="5.5" viewBox="0 0 9 5.5"><path d="M0 0h9L4.5 5.5z" fill="#000080"/></svg><svg style="left:753.5px;top:501.3px" width="9" height="5.5" viewBox="0 0 9 5.5"><path d="M0 0h9L4.5 5.5z" fill="#000080"/></svg><div style="left:652.5px;top:503.2px;width:98px;height:1.7px;background:repeating-linear-gradient(to right,#1a1a90 0,#1a1a90 1.6px,transparent 1.6px,transparent 4.1px);"></div>
<div style="left:12.6px;top:510px;width:1374.8px;height:1px;background:#c0c0c0;"></div>
<div style="left:12.6px;top:511px;width:1374.8px;height:1px;background:#b0b0b0;"></div>
<div style="left:12.6px;top:511px;width:1374.8px;height:1px;background:#f3f3f3;"></div>
<div style="left:12.6px;top:512px;width:1374.8px;height:1px;background:#ffffff;"></div>
<div style="left:12.6px;top:533px;width:1374.8px;height:23.5px;background:#fff;"></div>
<span class="t" style="font-size:17.88px;line-height:17.88px;color:#000;font-weight:bold;left:167.1px;top:515.12px;transform:scaleX(0.9354);">Cliente</span>
<div style="left:396px;top:513px;width:20.5px;height:20px;background:#f6f6f6;"></div>
<span class="t" style="font-size:14.97px;line-height:14.97px;color:#05050c;font-weight:bold;left:400.8px;top:517.18px;transform:scaleX(1.1767);-webkit-text-stroke:0.35px #05050c;">x</span>
<svg style="left:400.5px;top:540px" width="12" height="11" viewBox="0 0 12 11"><path d="M6.4 3.9C8 2.4 9.8 1.2 11.8 0.4 10.6 3 8.4 6.6 6.2 10.8L5 9.4C5.5 7.6 6 5.8 6.4 3.9z" fill="#ff0a0a"/><path d="M0.2 0.5C2.6 1 4.6 2.2 6.4 3.9L5.9 5.4C4.6 4 3.2 3 1.9 2.4 3.2 4.4 4.2 6.8 5.1 9.4L6.2 10.8C5 10.8 4.4 9.4 4 8 3 5.4 1.8 3 0.2 0.5z" fill="#ff1a1a"/><path d="M1.9 2.4L5.9 5.4 5.1 9.4C4.2 6.8 3.2 4.4 1.9 2.4z" fill="#ffb49c"/></svg><span class="t" style="font-size:17.88px;line-height:17.88px;color:#000;font-weight:bold;left:454.9px;top:515.12px;transform:scaleX(0.8992);">Camión</span>
<div style="left:571px;top:513px;width:20.5px;height:20px;background:#f6f6f6;"></div>
<span class="t" style="font-size:14.97px;line-height:14.97px;color:#05050c;font-weight:bold;left:575.8px;top:517.18px;transform:scaleX(1.1767);-webkit-text-stroke:0.35px #05050c;">x</span>
<svg style="left:575.3px;top:540px" width="12" height="11" viewBox="0 0 12 11"><path d="M6.4 3.9C8 2.4 9.8 1.2 11.8 0.4 10.6 3 8.4 6.6 6.2 10.8L5 9.4C5.5 7.6 6 5.8 6.4 3.9z" fill="#ff0a0a"/><path d="M0.2 0.5C2.6 1 4.6 2.2 6.4 3.9L5.9 5.4C4.6 4 3.2 3 1.9 2.4 3.2 4.4 4.2 6.8 5.1 9.4L6.2 10.8C5 10.8 4.4 9.4 4 8 3 5.4 1.8 3 0.2 0.5z" fill="#ff1a1a"/><path d="M1.9 2.4L5.9 5.4 5.1 9.4C4.2 6.8 3.2 4.4 1.9 2.4z" fill="#ffb49c"/></svg><span class="t" style="font-size:17.88px;line-height:17.88px;color:#000;font-weight:bold;left:710.7px;top:515.12px;transform:scaleX(0.9597);">Contratada por ...</span>
<div style="left:975px;top:513px;width:20px;height:20px;background:#f6f6f6;"></div>
<span class="t" style="font-size:14.97px;line-height:14.97px;color:#05050c;font-weight:bold;left:979.6px;top:517.18px;transform:scaleX(1.1767);-webkit-text-stroke:0.35px #05050c;">x</span>
<svg style="left:979.3px;top:540px" width="12" height="11" viewBox="0 0 12 11"><path d="M6.4 3.9C8 2.4 9.8 1.2 11.8 0.4 10.6 3 8.4 6.6 6.2 10.8L5 9.4C5.5 7.6 6 5.8 6.4 3.9z" fill="#ff0a0a"/><path d="M0.2 0.5C2.6 1 4.6 2.2 6.4 3.9L5.9 5.4C4.6 4 3.2 3 1.9 2.4 3.2 4.4 4.2 6.8 5.1 9.4L6.2 10.8C5 10.8 4.4 9.4 4 8 3 5.4 1.8 3 0.2 0.5z" fill="#ff1a1a"/><path d="M1.9 2.4L5.9 5.4 5.1 9.4C4.2 6.8 3.2 4.4 1.9 2.4z" fill="#ffb49c"/></svg><span class="t" style="font-size:17.88px;line-height:17.88px;color:#000;font-weight:bold;left:1138.2px;top:515.12px;transform:scaleX(1.0049);">Mercancía</span>
<span class="t" style="font-size:14.97px;line-height:14.97px;color:#05050c;font-weight:bold;left:1372.8px;top:517.18px;transform:scaleX(1.1767);-webkit-text-stroke:0.35px #05050c;">x</span>
<svg style="left:1372.8px;top:540px" width="12" height="11" viewBox="0 0 12 11"><path d="M6.4 3.9C8 2.4 9.8 1.2 11.8 0.4 10.6 3 8.4 6.6 6.2 10.8L5 9.4C5.5 7.6 6 5.8 6.4 3.9z" fill="#ff0a0a"/><path d="M0.2 0.5C2.6 1 4.6 2.2 6.4 3.9L5.9 5.4C4.6 4 3.2 3 1.9 2.4 3.2 4.4 4.2 6.8 5.1 9.4L6.2 10.8C5 10.8 4.4 9.4 4 8 3 5.4 1.8 3 0.2 0.5z" fill="#ff1a1a"/><path d="M1.9 2.4L5.9 5.4 5.1 9.4C4.2 6.8 3.2 4.4 1.9 2.4z" fill="#ffb49c"/></svg><div style="left:12.3px;top:557px;width:1375.2px;height:176.5px;background:#fff;"></div>
<div style="left:12.3px;top:557px;width:1373.9px;height:175.2px;background:#9a9a9a;"></div>
<div style="left:13.5px;top:558px;width:1372.8px;height:174px;background:#e3e3e3;"></div>
<div style="left:13.5px;top:558px;width:1371.5px;height:172.7px;background:#606060;"></div>
<div style="left:12.3px;top:556px;width:1374.2px;height:1px;background:#bcbcbc;"></div>
<div style="left:12.3px;top:557px;width:1374.2px;height:1px;background:#bcbcbc;"></div>
<div style="left:13.3px;top:557px;width:1372.2px;height:1px;background:#8d8d8d;"></div>
<div style="left:13.3px;top:558px;width:1372.2px;height:1px;background:#606060;"></div>
<div style="left:13.3px;top:559px;width:1372.2px;height:1px;background:#939393;"></div>
<div style="left:14px;top:559px;width:1348px;height:150px;background:#ffffe1;"></div>
<div style="left:31px;top:608.7px;width:1331px;height:1.5px;background:#c2c2c2;"></div>
<div style="left:31px;top:634.2px;width:1331px;height:1.5px;background:#c2c2c2;"></div>
<div style="left:109.5px;top:584.3px;width:1.5px;height:51px;background:#c2c2c2;"></div>
<div style="left:163.9px;top:584.3px;width:1.5px;height:51px;background:#c2c2c2;"></div>
<div style="left:329.8px;top:584.3px;width:1.5px;height:51px;background:#c2c2c2;"></div>
<div style="left:559px;top:584.3px;width:1.5px;height:51px;background:#c2c2c2;"></div>
<div style="left:653.2px;top:584.3px;width:1.5px;height:51px;background:#c2c2c2;"></div>
<div style="left:770.2px;top:584.3px;width:1.5px;height:51px;background:#c2c2c2;"></div>
<div style="left:1000.2px;top:584.3px;width:1.5px;height:51px;background:#c2c2c2;"></div>
<div style="left:1229px;top:584.3px;width:1.5px;height:51px;background:#c2c2c2;"></div>
<div style="left:1361.7px;top:584.3px;width:1.5px;height:51px;background:#c2c2c2;"></div>
<div style="left:14px;top:559px;width:1348px;height:25.7px;background:#1c1c1c;"></div>
<div style="left:14px;top:559px;width:16.4px;height:25.7px;background:#f0f0f0;"></div>
<div style="left:31.7px;top:559.3px;width:77.6px;height:23.5px;background:#fff;"></div>
<div style="left:33px;top:560.6px;width:76.3px;height:22.2px;background:#e1e1e1;"></div>
<span class="t" style="font-size:17.88px;line-height:17.88px;color:#000;font-weight:bold;left:43.4px;top:563.82px;transform:scaleX(0.9354);">Pedido</span>
<div style="left:111.2px;top:559.3px;width:52.5px;height:23.5px;background:#fff;"></div>
<div style="left:112.5px;top:560.6px;width:51.2px;height:22.2px;background:#e1e1e1;"></div>
<div style="left:165.6px;top:559.3px;width:164px;height:23.5px;background:#fff;"></div>
<div style="left:166.9px;top:560.6px;width:162.7px;height:22.2px;background:#e1e1e1;"></div>
<span class="t" style="font-size:17.88px;line-height:17.88px;color:#000;font-weight:bold;left:215.9px;top:563.82px;transform:scaleX(0.9459);">Albarán</span>
<div style="left:331.5px;top:559.3px;width:227.3px;height:23.5px;background:#fff;"></div>
<div style="left:332.8px;top:560.6px;width:226px;height:22.2px;background:#00ffff;"></div>
<span class="t" style="font-size:17.88px;line-height:17.88px;color:#000;font-weight:bold;left:416.3px;top:563.82px;transform:scaleX(0.9505);">Cliente</span>
<svg style="left:540.3px;top:566px" width="11.6" height="10" viewBox="0 0 11.6 10"><path d="M5.6 0.7L0.7 9.2" fill="none" stroke="#8a7a78" stroke-width="1.3" stroke-dasharray="1.6 1.1"/><path d="M5.6 0.7L10.9 9.2H0.4" fill="none" stroke="#fff" stroke-width="1.4"/></svg><div style="left:560.6px;top:559.3px;width:92.4px;height:23.5px;background:#fff;"></div>
<div style="left:561.9px;top:560.6px;width:91.1px;height:22.2px;background:#e1e1e1;"></div>
<span class="t" style="font-size:17.88px;line-height:17.88px;color:#000;font-weight:bold;left:570.4px;top:563.82px;transform:scaleX(1.0060);">F. Salida</span>
<div style="left:654.8px;top:559.3px;width:115.2px;height:23.5px;background:#fff;"></div>
<div style="left:656.1px;top:560.6px;width:113.9px;height:22.2px;background:#e1e1e1;"></div>
<span class="t" style="font-size:17.88px;line-height:17.88px;color:#000;font-weight:bold;left:666.9px;top:563.82px;transform:scaleX(0.9774);">Hora carga</span>
<div style="left:772px;top:559.3px;width:228px;height:23.5px;background:#fff;"></div>
<div style="left:773.3px;top:560.6px;width:226.7px;height:22.2px;background:#e1e1e1;"></div>
<span class="t" style="font-size:17.88px;line-height:17.88px;color:#000;font-weight:bold;left:838.1px;top:563.82px;transform:scaleX(0.9786);">Recoger en</span>
<div style="left:1001.8px;top:559.3px;width:227px;height:23.5px;background:#fff;"></div>
<div style="left:1003.1px;top:560.6px;width:225.7px;height:22.2px;background:#e1e1e1;"></div>
<span class="t" style="font-size:17.88px;line-height:17.88px;color:#000;font-weight:bold;left:1025.7px;top:563.82px;transform:scaleX(0.9657);">Recoger en, dirección</span>
<div style="left:1230.6px;top:559.3px;width:130.9px;height:23.5px;background:#fff;"></div>
<div style="left:1231.9px;top:560.6px;width:129.6px;height:22.2px;background:#e1e1e1;"></div>
<span class="t" style="font-size:17.88px;line-height:17.88px;color:#000;font-weight:bold;left:1279.2px;top:563.82px;transform:scaleX(0.9242);">Origen</span>
<div style="left:14px;top:582px;width:1348px;height:1px;background:#cfcfb7;"></div>
<div style="left:14px;top:583px;width:1348px;height:1px;background:#101010;"></div>
<div style="left:14px;top:584px;width:1348px;height:1px;background:#58584f;"></div>
<div style="left:14px;top:584.6px;width:17.5px;height:25.5px;background:#1c1c1c;"></div>
<div style="left:14px;top:584.6px;width:16px;height:23.9px;background:#fff;"></div>
<div style="left:15.3px;top:585.9px;width:14.7px;height:22.6px;background:#f0f0f0;"></div>
<div style="left:14px;top:610.1px;width:17.5px;height:25.5px;background:#1c1c1c;"></div>
<div style="left:14px;top:610.1px;width:16px;height:23.9px;background:#fff;"></div>
<div style="left:15.3px;top:611.4px;width:14.7px;height:22.6px;background:#f0f0f0;"></div>
<svg style="left:18.5px;top:615px" width="8.5" height="15" viewBox="0 0 8.5 15"><path d="M0.3 0.3v14.4L8.2 7.5z" fill="#000"/></svg><span class="t" style="font-size:17.88px;line-height:17.88px;color:#000;left:44.6px;top:589.82px;transform:scaleX(0.8321);">000001</span>
<span class="t" style="font-size:17.88px;line-height:17.88px;color:#000;left:114.6px;top:589.82px;transform:scaleX(0.8632);">2004</span>
<span class="t" style="font-size:17.88px;line-height:17.88px;color:#000;left:333.9px;top:589.82px;transform:scaleX(0.8577);">Textiles DORITE</span>
<span class="t" style="font-size:17.88px;line-height:17.88px;color:#000;left:564.6px;top:589.82px;transform:scaleX(0.9330);">02/03/2004</span>
<span class="t" style="font-size:17.88px;line-height:17.88px;color:#000;left:44.6px;top:615.32px;transform:scaleX(0.8321);">000001</span>
<span class="t" style="font-size:17.88px;line-height:17.88px;color:#000;left:114.6px;top:615.32px;transform:scaleX(0.8632);">2003</span>
<span class="t" style="font-size:17.88px;line-height:17.88px;color:#000;left:333.9px;top:615.32px;transform:scaleX(0.8699);">Yesos ABUIN</span>
<span class="t" style="font-size:17.88px;line-height:17.88px;color:#000;left:564.6px;top:615.32px;transform:scaleX(0.9330);">16/06/2003</span>
<span class="t" style="font-size:17.88px;line-height:17.88px;color:#000;left:772.7px;top:615.32px;transform:scaleX(0.8576);">Almacén principal</span>
<span class="t" style="font-size:17.88px;line-height:17.88px;color:#000;left:1004.1px;top:615.32px;transform:scaleX(0.9077);">C/ Rey V s/n</span>
<span class="t" style="font-size:17.88px;line-height:17.88px;color:#000;left:1233.2px;top:615.32px;transform:scaleX(0.8451);">FERROL (C)</span>
<div style="left:1362px;top:559px;width:23.5px;height:150px;background:#f1f1f1;border-left:1px solid #e6e6e6;"></div>
<svg style="left:1368.8px;top:568.5px" width="10.5" height="6.5" viewBox="0 0 10.5 6.5"><path d="M0.3 6.3L5.25 0.6 10.2 6.3z" fill="#4d4d4d"/></svg><svg style="left:1368.8px;top:692px" width="10.5" height="6.5" viewBox="0 0 10.5 6.5"><path d="M0.3 0.3L5.25 6 10.2 0.3z" fill="#4d4d4d"/></svg><div style="left:1363.3px;top:617.8px;width:20.8px;height:64.4px;border:1px solid #8f8f8f;border-radius:3px;background:linear-gradient(to right,#e9e9e9 0,#f3f3f3 30%,#dcdcde 60%,#c9cacd 100%);box-shadow:inset 0 0 0 1px #fbfbfb;"></div>
<div style="left:1368.8px;top:643.3px;width:10px;height:1.7px;background:#4c5566;"></div>
<div style="left:1368.8px;top:646.7px;width:10px;height:1.7px;background:#4c5566;"></div>
<div style="left:1368.8px;top:650.1px;width:10px;height:1.7px;background:#4c5566;"></div>
<div style="left:1368.8px;top:653.5px;width:10px;height:1.7px;background:#4c5566;"></div>
<div style="left:14px;top:709px;width:1371.5px;height:22.5px;background:#ececec;border-top:1px solid #e2e2e2;"></div>
<svg style="left:22.3px;top:714.5px" width="6.5" height="10.5" viewBox="0 0 6.5 10.5"><path d="M6.2 0.3L0.5 5.25 6.2 10.2z" fill="#4d4d4d"/></svg><svg style="left:1346.5px;top:714.5px" width="6.5" height="10.5" viewBox="0 0 6.5 10.5"><path d="M0.3 0.3L6 5.25 0.3 10.2z" fill="#4d4d4d"/></svg><div style="left:39.8px;top:709.5px;width:21px;height:20.5px;border:1px solid #979797;border-radius:3px;background:linear-gradient(to bottom,#f6f6f6 0,#e9e9eb 50%,#d6d7da 100%);box-shadow:inset 0 0 0 1px #fff;"></div>
<div style="left:1362px;top:709px;width:23.5px;height:22.5px;background:#eeeeee;"></div>
<div style="left:12.6px;top:734px;width:1374.8px;height:1px;background:#e0e0e0;"></div>
<div style="left:12.6px;top:735px;width:1374.8px;height:1px;background:#a0a0a0;"></div>
<div style="left:12.6px;top:736px;width:1374.8px;height:1px;background:#e0e0e0;"></div>
<div style="left:12.6px;top:736px;width:1374.8px;height:1px;background:#fcfcfc;"></div>
<div style="left:12.6px;top:737px;width:1374.8px;height:1px;background:#f6f6f6;"></div>
<svg style="left:29.6px;top:740.3px" width="30" height="29.5" viewBox="0 0 30 29.5">
<rect x="0.3" y="0.8" width="29.4" height="28.5" fill="#c3c3c3"/>
<rect x="27.4" y="9.5" width="2.4" height="10.6" fill="#000"/>
<path d="M10 9.5L16 6.5 23.5 8.5 26.5 13.5 24 19.5 17 22.5 11.5 19z" fill="#f2a468"/>
<path d="M15.5 8.2L22.5 9.2 25.5 13.5 23.5 17.8 18.5 12.5z" fill="#fdd8b0"/>
<path d="M10 9.5L16 6.5 23.5 8.5" fill="none" stroke="#9a3a10" stroke-width="1.5"/>
<path d="M9.5 14L13.5 21.5 18 22.5 19.5 17.5 14 12z" fill="#c4541a"/>
<circle cx="15.2" cy="17.4" r="1" fill="#f8c090"/>
<circle cx="6.6" cy="6.4" r="5.3" fill="#00d4ee" stroke="#030e78" stroke-width="2.5"/>
<path d="M4.4 5.4a2.5 2.5 0 1 1 1 3.4" fill="none" stroke="#1c6cc8" stroke-width="1.2"/>
<circle cx="21.8" cy="22.2" r="5.3" fill="#00d4ee" stroke="#030e78" stroke-width="2.5"/>
<path d="M19.7 21.2a2.5 2.5 0 1 1 1 3.4" fill="none" stroke="#1c6cc8" stroke-width="1.2"/>
<path d="M11.3 10.8L17.6 17.8" stroke="#030e78" stroke-width="2.6"/>
<path d="M12 10.6L18.2 17.4" stroke="#12c8ea" stroke-width="1.1"/>
<path d="M1.4 27V16.6h3.5a2.8 2.8 0 0 1 0 5.6H1.4" fill="none" stroke="#0000ff" stroke-width="2.3"/>
<path d="M1.2 28.4C6 26.4 10 28.8 14 27.8S22 29.2 27.5 28.3" fill="none" stroke="#3c9090" stroke-width="1.2"/>
</svg><span class="t" style="font-size:17.88px;line-height:17.88px;color:#000;left:66.2px;top:747.72px;transform:scaleX(0.8270);">Crear <u>p</u>edido</span>
<svg style="left:187.5px;top:740px" width="31" height="30" viewBox="0 0 31 30"><path d="M0.5 13.5L14 3.6 19 0.2 23.5 2.5V10L30.3 17V20.7L10.3 29.3 0.5 16.5z" fill="#7074b2"/>
<path d="M19 0.2L23.5 2.5V10L18.6 8.2z" fill="#5c60a2"/>
<path d="M14 3.6L19 0.2 18.6 8.2z" fill="#6e72b0"/>
<path d="M6.5 10.8L16 7.2 21 13 11.7 16.5z" fill="#a4a7d4"/>
<path d="M0.5 13.5L10 24 10.3 29.3 0.5 16.5z" fill="#54589a"/>
<path d="M10 24L30.3 17V20.7L10.3 29.3z" fill="#5c60a2"/><path d="M23.6 22C23.2 25.5 25 28.2 30.5 28.6V30.2C24.5 29.8 21.6 26.5 22 22.6z" fill="#4a4e9a"/></svg><span class="t" style="font-size:17.88px;line-height:17.88px;color:#9c9c9c;left:223.1px;top:747.72px;transform:scaleX(0.8575);text-shadow:1.2px 1.2px 0 #fff;"><u>A</u>signar carga</span>
<svg style="left:353.3px;top:740px" width="31" height="30" viewBox="0 0 31 30"><path d="M0.5 13.5L14 3.6 19 0.2 23.5 2.5V10L30.3 17V20.7L10.3 29.3 0.5 16.5z" fill="#5d78ac"/>
<path d="M19 0.2L23.5 2.5V10L18.6 8.2z" fill="#4d6aa2"/>
<path d="M14 3.6L19 0.2 18.6 8.2z" fill="#5a74a8"/>
<path d="M6.5 10.8L16 7.2 21 13 11.7 16.5z" fill="#9cb0d2"/>
<path d="M0.5 13.5L10 24 10.3 29.3 0.5 16.5z" fill="#46609a"/>
<path d="M10 24L30.3 17V20.7L10.3 29.3z" fill="#4d6aa2"/><path d="M6.5 15.5C9 18 10.5 20.5 11.5 24.5 16 15 21.5 7.5 29.5 0.5" fill="none" stroke="#111122" stroke-width="2"/><path d="M0.5 13.5L14 3.6 19 0.2 23.5 2.5V10L30.3 17V20.7L10.3 29.3 0.5 16.5z" fill="none" stroke="#b078e8" stroke-width="0.7" opacity="0.8"/></svg><span class="t" style="font-size:17.88px;line-height:17.88px;color:#9c9c9c;left:389.4px;top:747.72px;transform:scaleX(0.8420);text-shadow:1.2px 1.2px 0 #fff;">Confirmar <u>ll</u>egada</span>
<svg style="left:536.8px;top:745.5px" width="29" height="24" viewBox="0 0 29 24">
<path d="M3.5 8L10.5 0.8 25 6.5 19.5 13.5z" fill="#c6c6c6"/>
<path d="M9.5 2.5L17 5.5M12.5 1.8L20 4.8" stroke="#e4e4e4" stroke-width="1.2"/>
<path d="M3.5 8L19.5 13.5V22.5L3.5 16z" fill="#a8a8a8"/>
<path d="M19.5 13.5L25 6.5 28.3 8V17.5L23.5 22.8 19.5 22.5z" fill="#8c8c8c"/><path d="M22.6 12.2L28.3 8V17.5L23.5 22.8 22.6 22.6z" fill="#161616"/>
<path d="M5.5 11L17 15" stroke="#000" stroke-width="1.8"/>
<path d="M0.5 15.5L8 12.5 16 16.5 13.5 20.5 7.5 23.5 0.8 18.5z" fill="#d8d8d8" stroke="#8a8a8a" stroke-width="0.8"/>
<path d="M3 16L8.5 14 13 16.5 8 20z" fill="#f2f2f2"/>
<rect x="20" y="14.5" width="2.2" height="2.4" fill="#ff2020"/>
<rect x="20" y="17.5" width="2.2" height="2.6" fill="#10e020"/>
</svg><span class="t" style="font-size:17.88px;line-height:17.88px;color:#000;left:572.3px;top:747.72px;transform:scaleX(0.8295);"><u>G</u>enerar listado</span>
<svg style="left:715.5px;top:741.5px" width="31" height="27.5" viewBox="0 0 31 27.5">
<rect x="0.3" y="0.3" width="20" height="27" rx="1.8" fill="#1646d8"/>
<rect x="2.2" y="2.4" width="10.8" height="23" fill="url(#dg)"/>
<defs><linearGradient id="dg" x1="0" y1="0" x2="0.4" y2="1"><stop offset="0" stop-color="#7ab4f6"/><stop offset="1" stop-color="#2456cc"/></linearGradient></defs>
<path d="M10.5 3.4H17.2V25.6H7.5V24.2H12.6V4.8H10.5z" fill="#000"/>
<rect x="17.2" y="2.5" width="1.4" height="23" fill="#7a7af8"/>
<path d="M12.8 12.2V17.4L9.8 14.8z" fill="#ffee00"/>
<path d="M1.3 5.5h1.6M1.3 9h1.6M1.3 12.5h1.6M1.3 16h1.6M1.3 19.5h1.6M1.3 23h1.6" stroke="#8080ff" stroke-width="0.9"/>
<path d="M30.3 15.2H21.5M26 10.6L21.3 15.2 26 19.8" fill="none" stroke="#ff0a0a" stroke-width="1.7"/>
</svg><span class="t" style="font-size:17.88px;line-height:17.88px;color:#000;left:751.4px;top:747.72px;transform:scaleX(0.8056);"><u>S</u>alir</span>
<svg style="left:860.5px;top:746.6px" width="16" height="15.5" viewBox="0 0 16 15.5"><path d="M8.6 14.2C5.2 12.4 2.6 10 2.5 7.3 2.4 3.9 6 1.9 9.3 2.6 10.8 2.9 12 3.7 12.9 4.8" fill="none" stroke="#000" stroke-width="2.9"/><path d="M15 0.7V7.9H7.5z" fill="#000"/></svg><div style="left:905px;top:744.7px;width:18px;height:17.8px;background:#ffffff;"></div>
<div style="left:905px;top:744.7px;width:17px;height:16.8px;background:#a0a0a0;"></div>
<div style="left:906px;top:745.7px;width:16px;height:15.8px;background:#e3e3e3;"></div>
<div style="left:906px;top:745.7px;width:14px;height:13.8px;background:#696969;"></div>
<div style="left:908px;top:747.7px;width:12px;height:11.8px;background:#fff;"></div>
<span class="t" style="font-size:17.88px;line-height:17.88px;color:#0000ff;left:931.4px;top:745.92px;transform:scaleX(0.8617);">Pedidos del día seleccionado</span>
</div></body></html>
